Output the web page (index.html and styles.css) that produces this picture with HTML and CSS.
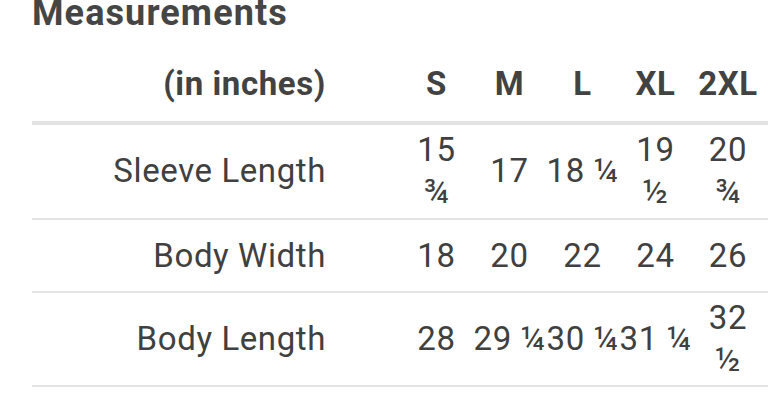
FILE: index.html
```html
<!DOCTYPE html>
<html lang="en">
<head>
<meta charset="utf-8">
<title>Measurements</title>
<link rel="stylesheet" href="styles.css">
</head>
<body>
<section class="sheet">
  <h1 class="title">Measurements</h1>
  <table class="sizes">
    <colgroup>
      <col class="col-label">
      <col class="col-size">
      <col class="col-size">
      <col class="col-size">
      <col class="col-size">
      <col class="col-last">
    </colgroup>
    <thead>
      <tr class="head-row">
        <th class="label">(in inches)</th>
        <th>S</th>
        <th>M</th>
        <th>L</th>
        <th>XL</th>
        <th class="last">2XL</th>
      </tr>
    </thead>
    <tbody>
      <tr class="row row-tall">
        <td class="label">Sleeve Length</td>
        <td>15<br>¾</td>
        <td>17</td>
        <td>18 ¼</td>
        <td>19<br>½</td>
        <td class="last">20<br>¾</td>
      </tr>
      <tr class="row">
        <td class="label">Body Width</td>
        <td>18</td>
        <td>20</td>
        <td>22</td>
        <td>24</td>
        <td class="last">26</td>
      </tr>
      <tr class="row">
        <td class="label">Body Length</td>
        <td>28</td>
        <td>29 ¼</td>
        <td>30 ¼</td>
        <td>31 ¼</td>
        <td class="last">32<br>½</td>
      </tr>
    </tbody>
  </table>
</section>
</body>
</html>
```

FILE: styles.css
```css
html, body {
  margin: 0;
  padding: 0;
  background: #ffffff;
}

body {
  font-family: Roboto, "Liberation Sans", sans-serif;
  color: #404040;
  overflow: hidden;
  width: 768px;
  height: 420px;
}

.sheet {
  padding-left: 32px;
}

.title {
  margin: -4px 0 0 0;
  font-size: 36px;
  line-height: 35px;
  font-weight: 700;
  letter-spacing: 1.1px;
  color: #454545;
}

.sizes {
  border-collapse: collapse;
  table-layout: fixed;
  width: 736px;
  font-size: 33px;
  line-height: 42px;
  letter-spacing: 0.6px;
}

.col-label { width: 368px; }
.col-size { width: 73px; }
.col-last { width: 77px; }

.sizes th,
.sizes td {
  padding: 0;
  text-align: center;
  white-space: nowrap;
}

.sizes th {
  font-weight: 700;
  vertical-align: bottom;
  padding-bottom: 16px;
  color: #424242;
}

.head-row {
  height: 92px;
  border-bottom: 4px solid #e3e3e3;
}

.row {
  height: 73px;
  border-bottom: 2px solid #e4e4e4;
}

.sizes td {
  padding-top: 4px;
  padding-bottom: 4px;
  vertical-align: middle;
}

.sizes .row-tall td {
  padding-bottom: 5px;
}

.sizes .label {
  text-align: right;
  padding-right: 74px;
}

.sizes .last {
  padding-right: 5px;
}
```
